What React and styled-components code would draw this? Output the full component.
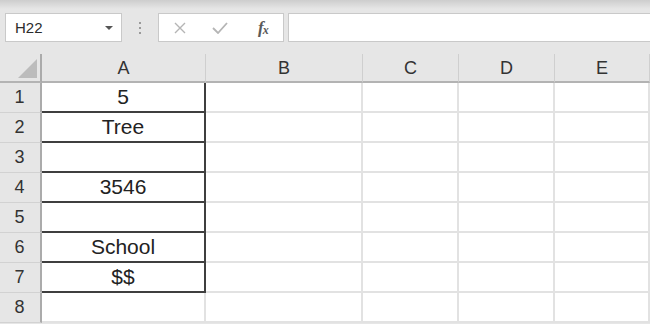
import React from 'react';
import styled, { createGlobalStyle } from 'styled-components';

const COLUMNS = ['A', 'B', 'C', 'D', 'E'];
const ROWS = [
	{ n: 1, value: '5' },
	{ n: 2, value: 'Tree' },
	{ n: 3, value: '' },
	{ n: 4, value: '3546' },
	{ n: 5, value: '' },
	{ n: 6, value: 'School' },
	{ n: 7, value: '$$' },
	{ n: 8, value: '' },
];
const BORDERED = 7;

const GlobalStyle = createGlobalStyle`
	html, body {
		margin: 0;
		padding: 0;
		background: #e6e6e6;
		overflow: hidden;
	}
	body {
		font-family: "Liberation Sans", Arial, sans-serif;
	}
`

const Page = styled.div`
	width: 650px;
	height: 324px;
	overflow: hidden;
	background: #e6e6e6;
`

const Toolbar = styled.div`
	height: 54px;
	box-sizing: border-box;
	padding: 13px 0 12px 5px;
	display: flex;
	align-items: stretch;
	background: linear-gradient(180deg, #cdcdcd 0px, #e6e6e6 9px, #e6e6e6 100%);
`

const Box = styled.div`
	box-sizing: border-box;
	background: #fff;
	border: 1px solid #c9c9c9;
	display: flex;
	align-items: center;
`

const NameBox = styled(Box)`
	width: 117px;
	padding: 0 0 0 9px;
	justify-content: space-between;
	font-size: 15px;
	color: #2b2b2b;
`

const DropArrow = styled.span`
	width: 0;
	height: 0;
	margin-right: 8px;
	border-left: 4px solid transparent;
	border-right: 4px solid transparent;
	border-top: 4px solid #555;
`

const Grip = styled.div`
	width: 36px;
	display: flex;
	flex-direction: column;
	align-items: center;
	justify-content: center;
	gap: 3px;

	span {
		width: 2px;
		height: 2px;
		background: #9a9a9a;
	}
`

const FormulaButtons = styled(Box)`
	width: 126px;
	padding: 0 0 0 15px;
	gap: 26px;
`

const FxLabel = styled.span`
	font-family: "Liberation Serif", "Times New Roman", serif;
	font-style: italic;
	font-weight: bold;
	font-size: 17px;
	color: #5a5a5a;
	margin-left: 4px;
	letter-spacing: -1px;

	sub {
		font-size: 12px;
		vertical-align: -1px;
	}
`

const FormulaInput = styled(Box)`
	flex: 1;
	margin-left: 4px;
	border-right: none;
`

const Sheet = styled.div`
	display: grid;
	grid-template-columns: 42px 164px 157px 96px 96px 1fr;
	grid-template-rows: 29px repeat(${props => props.rows}, 30px);
	background: #fff;
`

const Corner = styled.div`
	background: #e6e6e6;
	border-right: 2px solid #ababab;
	border-bottom: 2px solid #b3b3b3;
	box-sizing: border-box;
	display: flex;
	align-items: flex-end;
	justify-content: flex-end;
	padding: 0 3px 3px 0;
`

const ColHeader = styled.div`
	background: #e6e6e6;
	box-sizing: border-box;
	border-bottom: 2px solid #b3b3b3;
	border-right: 1px solid #cfcfcf;
	display: flex;
	align-items: center;
	justify-content: center;
	font-size: 18px;
	color: #333;
	padding-top: 2px;
`

const RowHeader = styled.div`
	background: #e6e6e6;
	box-sizing: border-box;
	border-right: 2px solid #ababab;
	border-bottom: 1px solid #d2d2d2;
	display: flex;
	align-items: center;
	justify-content: center;
	font-size: 18px;
	color: #333;
	padding-right: 1px;
`

const Cell = styled.div`
	box-sizing: border-box;
	border-right: ${props => props.$strong ? '2px solid #3f3f3f' : '2px solid #e2e2e2'};
	border-bottom: ${props => props.$strong ? '2px solid #3f3f3f' : '2px solid #e2e2e2'};
	display: flex;
	align-items: center;
	justify-content: center;
	font-size: 21px;
	color: #222;
	white-space: nowrap;
`

const CornerMark = () => (
	<svg width="19" height="19" viewBox="0 0 19 19">
		<polygon points="0,19 19,19 19,0" fill="#bcbcbc" />
	</svg>
)

const CancelIcon = () => (
	<svg width="12" height="12" viewBox="0 0 12 12">
		<path d="M1 1 L11 11 M11 1 L1 11" stroke="#b5b5b5" strokeWidth="1.4" fill="none" />
	</svg>
)

const CheckIcon = () => (
	<svg width="16" height="12" viewBox="0 0 16 12">
		<path d="M1 6 L6 11 L15 1" stroke="#b5b5b5" strokeWidth="1.8" fill="none" />
	</svg>
)

export default function App() {
	return <Page>
		<GlobalStyle />
		<Toolbar>
			<NameBox>H22<DropArrow /></NameBox>
			<Grip><span /><span /><span /></Grip>
			<FormulaButtons>
				<CancelIcon />
				<CheckIcon />
				<FxLabel>f<sub>x</sub></FxLabel>
			</FormulaButtons>
			<FormulaInput />
		</Toolbar>
		<Sheet rows={ROWS.length}>
			<Corner><CornerMark /></Corner>
			{COLUMNS.map(c => <ColHeader key={c}>{c}</ColHeader>)}
			{ROWS.map(row => <React.Fragment key={row.n}>
				<RowHeader>{row.n}</RowHeader>
				<Cell $strong={row.n <= BORDERED}>{row.value}</Cell>
				{COLUMNS.slice(1).map(c => <Cell key={c} />)}
			</React.Fragment>)}
		</Sheet>
	</Page>
}
